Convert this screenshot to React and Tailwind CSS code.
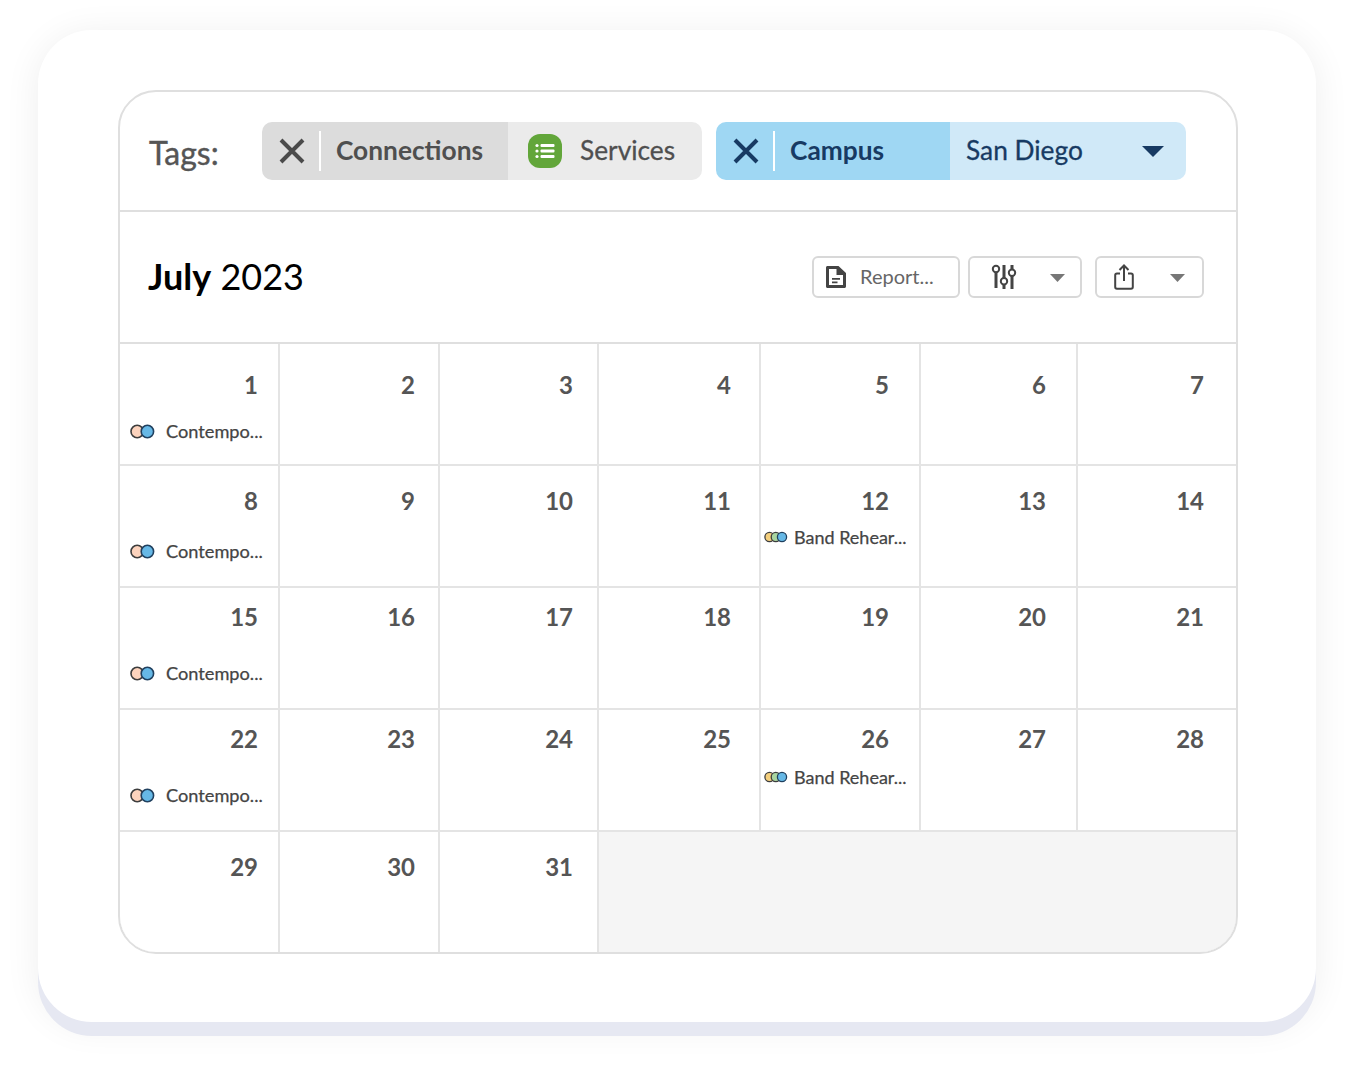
const colRight = ["pr-[20px]", "pr-[23px]", "pr-[24px]", "pr-[28px]", "pr-[30px]", "pr-[30px]", "pr-[32px]"];

const rows = [
  { pad: "pt-[29px]", days: [1, 2, 3, 4, 5, 6, 7] },
  { pad: "pt-[23px]", days: [8, 9, 10, 11, 12, 13, 14] },
  { pad: "pt-[17px]", days: [15, 16, 17, 18, 19, 20, 21] },
  { pad: "pt-[17px]", days: [22, 23, 24, 25, 26, 27, 28] },
  { pad: "pt-[23px]", days: [29, 30, 31] },
];

const events = {
  1: { type: "contemporary", gap: "mt-[24px]" },
  8: { type: "contemporary", gap: "mt-[28px]" },
  15: { type: "contemporary", gap: "mt-[34px]" },
  22: { type: "contemporary", gap: "mt-[34px]" },
  12: { type: "band", gap: "mt-[14px]" },
  26: { type: "band", gap: "mt-[16px]" },
};

const CloseIcon = ({ color }) => (
  <svg width="26" height="26" viewBox="0 0 26 26" fill="none">
    <path d="M2 2L24 24M24 2L2 24" stroke={color} strokeWidth="4" />
  </svg>
);

const Caret = ({ w, h, color, className }) => (
  <svg width={w} height={h} viewBox="0 0 22 11" preserveAspectRatio="none" className={className}>
    <path d="M0 0H22L11 11Z" fill={color} />
  </svg>
);

const ListIcon = () => (
  <div className="w-[34px] h-[34px] rounded-[12px] bg-[#62a63a] flex items-center justify-center">
    <svg width="20" height="16" viewBox="0 0 20 16" fill="#fff">
      <circle cx="2" cy="2.5" r="1.6" />
      <circle cx="2" cy="8" r="1.6" />
      <circle cx="2" cy="13.5" r="1.6" />
      <rect x="5.5" y="1" width="14" height="3" rx="1" />
      <rect x="5.5" y="6.5" width="14" height="3" rx="1" />
      <rect x="5.5" y="12" width="14" height="3" rx="1" />
    </svg>
  </div>
);

const ReportIcon = () => (
  <svg width="20" height="22" viewBox="0 0 20 22">
    <path fillRule="evenodd" fill="#444" d="M0 1.5C0 .7.7 0 1.5 0H12.5L20 7V20.5C20 21.3 19.3 22 18.5 22H1.5C.7 22 0 21.3 0 20.5ZM3 3V19H17V9H10.5V3ZM6 12H14V13.8H6ZM6 15.4H11.5V17.2H6Z" />
  </svg>
);

const SlidersIcon = () => (
  <svg width="26" height="26" viewBox="0 0 26 26" fill="none" stroke="#444" strokeWidth="2">
    <circle cx="5" cy="5" r="3.2" />
    <path d="M5 8.2V24" strokeWidth="3" />
    <path d="M13 1V14M13 20.5V25" strokeWidth="3" />
    <circle cx="13" cy="17.2" r="3.2" />
    <path d="M21 1V5.5M21 12V25" strokeWidth="3" />
    <circle cx="21" cy="8.7" r="3.2" />
  </svg>
);

const ShareIcon = () => (
  <svg width="20" height="26" viewBox="0 0 20 26" fill="none" stroke="#444" strokeWidth="2">
    <path d="M6 9.5H3C2 9.5 1.2 10.3 1.2 11.3V23C1.2 24 2 24.8 3 24.8H17C18 24.8 18.8 24 18.8 23V11.3C18.8 10.3 18 9.5 17 9.5H14" />
    <path d="M10 17V2M5.5 6L10 1.5L14.5 6" />
  </svg>
);

const ContemporaryDots = () => (
  <svg width="25" height="15" viewBox="0 0 25 15" className="shrink-0">
    <circle cx="7.2" cy="7.5" r="6.2" fill="#fcd3bd" stroke="#3d3d3d" strokeWidth="1.6" />
    <circle cx="17.4" cy="7.5" r="6.2" fill="#66b8e6" stroke="#20405f" strokeWidth="1.6" />
  </svg>
);

const BandDots = () => (
  <svg width="24" height="12" viewBox="0 0 24 12" className="shrink-0">
    <circle cx="5.5" cy="6" r="4.6" fill="#f4cf7d" stroke="#3d3d3d" strokeWidth="1.3" />
    <circle cx="11.8" cy="6" r="4.6" fill="#a8d5a0" stroke="#3d3d3d" strokeWidth="1.3" />
    <circle cx="18" cy="6" r="4.6" fill="#66b8e6" stroke="#20405f" strokeWidth="1.3" />
  </svg>
);

const Event = ({ type, gap }) => {
  if (type === "band") {
    return (
      <div className={"flex items-center pl-[3px] " + gap}>
        <BandDots />
        <span className="ml-[6px] text-[18px] leading-[20px] [-webkit-text-stroke:0.25px] text-[#444] whitespace-nowrap">Band Rehear...</span>
      </div>
    );
  }
  return (
    <div className={"flex items-center pl-[10px] " + gap}>
      <ContemporaryDots />
      <span className="ml-[11px] text-[18.2px] leading-[20px] [-webkit-text-stroke:0.25px] text-[#444] whitespace-nowrap">Contempo...</span>
    </div>
  );
};

const DayCell = ({ day, col, pad }) => (
  <div className={"bg-white h-[120px] " + pad}>
    <div className={"text-right text-[24px] leading-[24px] font-bold text-[#555] " + colRight[col]}>{day}</div>
    {events[day] && <Event type={events[day].type} gap={events[day].gap} />}
  </div>
);

const App = () => {
  return (
    <div className="w-[1354px] h-[1068px] bg-white pt-[30px] pl-[38px] overflow-hidden font-['Lato',sans-serif]">
      <div className="w-[1278px] h-[992px] rounded-[54px] bg-white pt-[60px] pl-[80px] shadow-[0_14px_0_#e6e8f2,0_4px_36px_rgba(0,0,0,0.07)]">
        <div className="w-[1120px] h-[864px] border-2 border-[#dfdfdf] rounded-[38px] overflow-hidden">
          <div className="h-[120px] border-b-2 border-[#dfdfdf] flex items-center pl-[29px]">
            <div className="w-[113px] text-[32px] leading-[40px] [-webkit-text-stroke:0.4px] text-[#555] pt-[4px]">Tags:</div>
            <div className="flex w-[440px] h-[58px] rounded-[10px] overflow-hidden">
              <div className="w-[246px] bg-[#dcdcdc] flex items-center pl-[17px]">
                <CloseIcon color="#4a4a4a" />
                <div className="w-[2px] h-[40px] bg-white ml-[14px]"></div>
                <span className="ml-[15px] text-[26.3px] font-bold text-[#4f4f4f] pb-[1px]">Connections</span>
              </div>
              <div className="flex-1 bg-[#ebebeb] flex items-center pl-[20px]">
                <ListIcon />
                <span className="ml-[18px] text-[26.3px] [-webkit-text-stroke:0.3px] text-[#4f4f4f] pb-[1px]">Services</span>
              </div>
            </div>
            <div className="flex w-[470px] h-[58px] rounded-[10px] overflow-hidden ml-[14px]">
              <div className="w-[234px] bg-[#9fd7f3] flex items-center pl-[17px]">
                <CloseIcon color="#173a63" />
                <div className="w-[2px] h-[40px] bg-white ml-[14px]"></div>
                <span className="ml-[15px] text-[26.3px] font-bold text-[#173a63] pb-[1px]">Campus</span>
              </div>
              <div className="flex-1 bg-[#d0e9f8] flex items-center justify-between pl-[16px] pr-[22px]">
                <span className="text-[26.3px] [-webkit-text-stroke:0.3px] text-[#173a63] pb-[1px]">San Diego</span>
                <Caret w={22} h={11} color="#173a63" />
              </div>
            </div>
          </div>

          <div className="h-[132px] border-b-2 border-[#dfdfdf] flex items-center justify-between pl-[28px] pr-[32px]">
            <div className="text-[36px] leading-[44px] text-black pb-[2px]">
              <span className="font-bold">July</span> 2023
            </div>
            <div className="flex items-center">
              <div className="w-[148px] h-[42px] border-2 border-[#d8d8d8] rounded-[6px] flex items-center pl-[12px]">
                <ReportIcon />
                <span className="ml-[14px] text-[20px] text-[#666] pb-[2px]">Report...</span>
              </div>
              <div className="w-[114px] h-[42px] border-2 border-[#d8d8d8] rounded-[6px] flex items-center justify-between pl-[21px] pr-[15px] ml-[8px]">
                <SlidersIcon />
                <Caret w={15} h={8} color="#777" className="mt-[1px]" />
              </div>
              <div className="w-[109px] h-[42px] border-2 border-[#d8d8d8] rounded-[6px] flex items-center justify-between pl-[17px] pr-[17px] ml-[13px]">
                <ShareIcon />
                <Caret w={15} h={8} color="#777" className="mt-[1px]" />
              </div>
            </div>
          </div>

          <div className="grid grid-cols-[158px_158px_157px_160px_158px_155px_158px] gap-[2px] bg-[#e4e4e4]">
            {rows.map((row) =>
              row.days.map((day, col) => <DayCell key={day} day={day} col={col} pad={row.pad} />)
            )}
            <div className="col-span-4 bg-[#f5f5f5] h-[120px]"></div>
          </div>
        </div>
      </div>
    </div>
  );
};

export default App;
